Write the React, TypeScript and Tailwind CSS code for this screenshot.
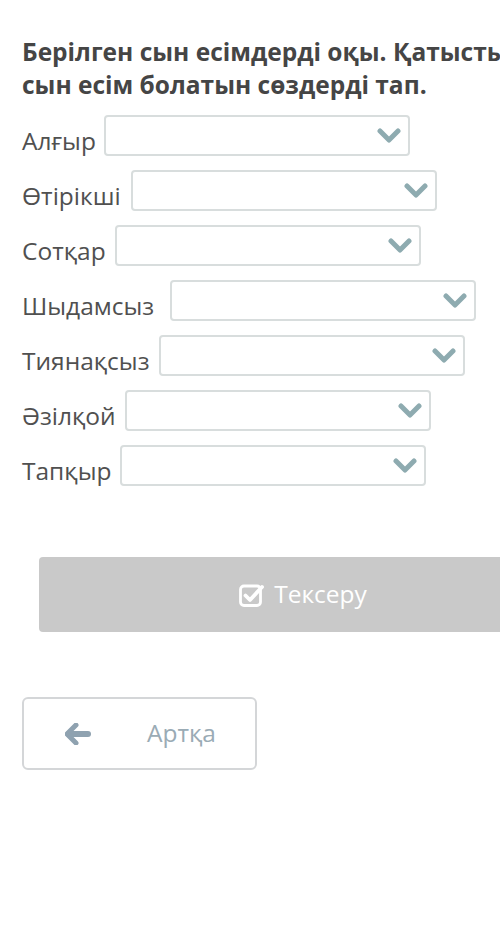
import React from "react";

const rows: [string, number][] = [
  ["Алғыр", 8],
  ["Өтірікші", 10],
  ["Сотқар", 9],
  ["Шыдамсыз", 16],
  ["Тиянақсыз", 9],
  ["Әзілқой", 9],
  ["Тапқыр", 9],
];

function Chevron() {
  return (
    <svg width="24" height="15" viewBox="0 0 24 15" className="shrink-0">
      <polyline points="3,3 12,12 21,3" fill="none" stroke="#8eabb0" strokeWidth="5" strokeLinecap="round" strokeLinejoin="round" />
    </svg>
  );
}

export default function App() {
  return (
    <div className="w-[500px] h-[928px] overflow-hidden bg-white" style={{ fontFamily: '"Open Sans", "Noto Sans", sans-serif' }}>
      <div className="pl-[22px] pt-[35px]">
        <h1 className="text-[24.5px] leading-[33px] font-bold text-[#454545] whitespace-nowrap">
          Берілген сын есімдерді оқы. Қатысты
          <br />
          сын есім болатын сөздерді тап.
        </h1>
        <div className="mt-[14px] flex flex-col gap-[14px]">
          {rows.map(([r, g]) => (
            <div key={r} className="flex items-start h-[41px]">
              <span className="pt-[5px] text-[24.5px] leading-[41px] text-[#505050] whitespace-nowrap">{r}</span>
              <div
                className="w-[306px] h-[41px] shrink-0 border-2 border-[#d8dddd] rounded-[4px] bg-white flex items-center justify-end pr-[7px]"
                style={{ marginLeft: g }}
              >
                <Chevron />
              </div>
            </div>
          ))}
        </div>
        <div className="mt-[71px] ml-[17px] w-[528px] h-[75px] bg-[#c9c9c9] rounded-[4px] flex items-center justify-center gap-[9px]">
          <svg width="26" height="24" viewBox="0 0 26 24">
            <rect x="1.5" y="3" width="20" height="19.5" rx="3.5" fill="none" stroke="#ffffff" strokeWidth="2.8" />
            <polyline points="6.5,12.5 11,17 23,4" fill="none" stroke="#ffffff" strokeWidth="3.8" strokeLinecap="round" strokeLinejoin="round" />
          </svg>
          <span className="text-[24.5px] text-white leading-none">Тексеру</span>
        </div>
        <div className="mt-[65px] w-[235px] h-[73px] border-2 border-[#d4d6d8] rounded-[6px] flex items-center">
          <svg width="26" height="22" viewBox="0 0 26 22" className="ml-[41px]">
            <path d="M11 2 L2 11 L11 20" fill="none" stroke="#8fa2b0" strokeWidth="5" strokeLinecap="round" strokeLinejoin="round" />
            <line x1="4" y1="11" x2="23" y2="11" stroke="#8fa2b0" strokeWidth="6" strokeLinecap="round" />
          </svg>
          <span className="ml-[56px] text-[24.5px] text-[#9aabb5]">Артқа</span>
        </div>
      </div>
    </div>
  );
}
